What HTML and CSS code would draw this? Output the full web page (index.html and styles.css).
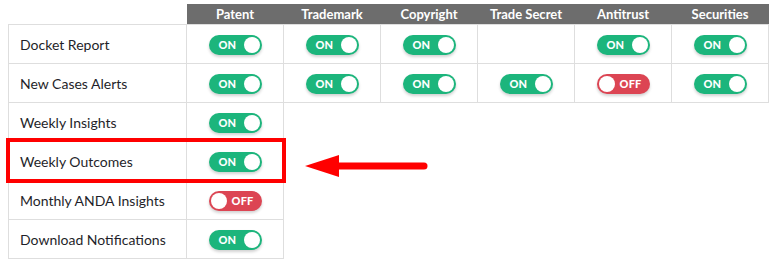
FILE: index.html
```html
<!DOCTYPE html>
<html>
<head>
<meta charset="utf-8">
<link rel="stylesheet" href="styles.css">
</head>
<body>
<div class="wrap">
<table class="grid">
  <colgroup>
    <col class="c-label"><col class="c"><col class="c"><col class="c"><col class="c"><col class="c"><col class="c">
  </colgroup>
  <thead>
    <tr>
      <th class="blank"></th>
      <th>Patent</th><th>Trademark</th><th>Copyright</th><th>Trade Secret</th><th>Antitrust</th><th>Securities</th>
    </tr>
  </thead>
  <tbody>
    <tr>
      <td class="label">Docket Report</td>
      <td><span class="tg on"><b>ON</b><i></i></span></td>
      <td><span class="tg on"><b>ON</b><i></i></span></td>
      <td><span class="tg on"><b>ON</b><i></i></span></td>
      <td></td>
      <td><span class="tg on"><b>ON</b><i></i></span></td>
      <td><span class="tg on"><b>ON</b><i></i></span></td>
    </tr>
    <tr>
      <td class="label">New Cases Alerts</td>
      <td><span class="tg on"><b>ON</b><i></i></span></td>
      <td><span class="tg on"><b>ON</b><i></i></span></td>
      <td><span class="tg on"><b>ON</b><i></i></span></td>
      <td><span class="tg on"><b>ON</b><i></i></span></td>
      <td><span class="tg off"><i></i><b>OFF</b></span></td>
      <td><span class="tg on"><b>ON</b><i></i></span></td>
    </tr>
    <tr>
      <td class="label">Weekly Insights</td>
      <td><span class="tg on"><b>ON</b><i></i></span></td>
    </tr>
    <tr>
      <td class="label">Weekly Outcomes</td>
      <td><span class="tg on"><b>ON</b><i></i></span></td>
    </tr>
    <tr>
      <td class="label">Monthly ANDA Insights</td>
      <td><span class="tg off"><i></i><b>OFF</b></span></td>
    </tr>
    <tr>
      <td class="label">Download Notifications</td>
      <td><span class="tg on"><b>ON</b><i></i></span></td>
    </tr>
  </tbody>
</table>
<div class="highlight"></div>
<svg class="arrow" width="130" height="30" viewBox="0 0 130 30">
  <path d="M34 15 H120" stroke="#ff0000" stroke-width="7" stroke-linecap="round"/>
  <polygon points="1,15 35,4 35,26" fill="#ff0000"/>
</svg>
</div>
</body>
</html>
```

FILE: styles.css
```css
html, body {
  margin: 0;
  padding: 0;
  background: #fff;
}
body {
  padding: 4px 8px;
  font-family: Lato, "Open Sans", sans-serif;
  color: #222;
}
.wrap {
  position: relative;
}
.grid {
  border-collapse: collapse;
  table-layout: fixed;
  width: 760px;
}
.c-label { width: 178px; }
.c { width: 97px; }
.grid th {
  background: #6d6d6d;
  color: #fff;
  font-weight: 700;
  font-size: 13px;
  height: 20px;
  padding: 0;
  text-align: center;
  border: none;
}
.grid th.blank {
  background: transparent;
}
.grid td {
  border: 1px solid #dedede;
  height: 38px;
  padding: 0;
  text-align: center;
  vertical-align: middle;
}
.grid td.label {
  text-align: left;
  padding-left: 11px;
  font-size: 14px;
  color: #1f1f2a;
}
.tg {
  display: inline-flex;
  align-items: center;
  justify-content: space-between;
  width: 53px;
  height: 20px;
  border-radius: 10px;
  box-sizing: border-box;
  padding: 0 2px 0 2px;
  vertical-align: middle;
  box-shadow: 0 2px 3px rgba(0,0,0,0.18);
}
.tg.on { background: #1cb57c; padding-left: 10px; }
.tg.off { background: #dc4553; padding-right: 8px; }
.tg b {
  color: #fff;
  font-size: 11px;
  font-weight: 900;
  letter-spacing: 0.2px;
}
.tg i {
  display: block;
  width: 16px;
  height: 16px;
  border-radius: 50%;
  background: #fff;
}
.highlight {
  position: absolute;
  left: -2px;
  top: 134px;
  width: 272px;
  height: 37px;
  border: 4px solid #ff0000;
}
.arrow {
  position: absolute;
  left: 296px;
  top: 147px;
}
```
